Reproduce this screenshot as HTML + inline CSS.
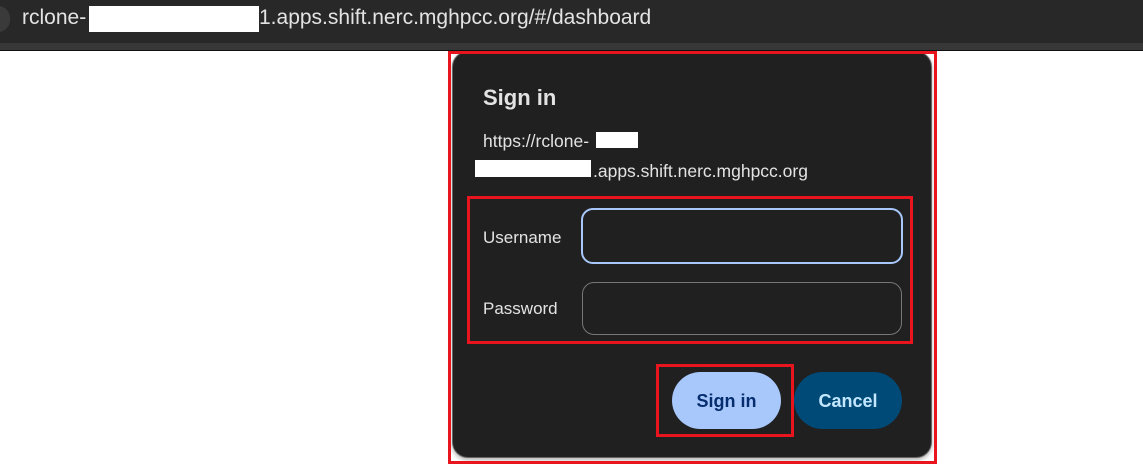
<!DOCTYPE html>
<html><head><meta charset="utf-8"><style>
*{margin:0;padding:0;box-sizing:border-box}
body{width:1143px;height:473px;background:#fff;position:relative;overflow:hidden;font-family:"Liberation Sans",sans-serif}
.a{position:absolute;white-space:nowrap}
</style></head><body>
<div class="a" style="left:0;top:0;width:1143px;height:43px;background:#282828"></div>
<div class="a" style="left:0;top:43px;width:1143px;height:8px;background:#373737"></div>
<div class="a" style="left:0;top:50px;width:1143px;height:1px;background:#111"></div>
<div class="a" style="left:-14px;top:6px;width:24px;height:26px;border-radius:13px;background:#3a3a3a"></div>
<div class="a" style="left:22px;top:6px;font-size:21px;color:#e3e3e3">rclone-</div>
<div class="a" style="left:259px;top:6px;font-size:21px;color:#e3e3e3">1.apps.shift.nerc.mghpcc.org/#/dashboard</div>
<div class="a" style="left:89px;top:6px;width:170px;height:26px;background:#fff"></div>

<div class="a" style="left:452px;top:51px;width:480px;height:407px;background:#202020;border:1px solid #666;border-radius:16px;box-shadow:0 2px 4px rgba(0,0,0,.3)"></div>
<div class="a" style="left:448px;top:51px;width:489px;height:413px;border:3px solid #e8141e"></div>

<div class="a" style="left:483px;top:85px;font-size:22px;font-weight:bold;color:#e3e3e3">Sign in</div>
<div class="a" style="left:483px;top:131px;font-size:17.5px;color:#e3e3e3">https://rclone-</div>
<div class="a" style="left:596px;top:132px;width:42px;height:16px;background:#fff"></div>
<div class="a" style="left:475px;top:160px;width:116px;height:17px;background:#fff"></div>
<div class="a" style="left:593px;top:161px;font-size:17.5px;color:#e3e3e3">.apps.shift.nerc.mghpcc.org</div>

<div class="a" style="left:467px;top:196px;width:446px;height:148px;border:3px solid #e8141e"></div>
<div class="a" style="left:483px;top:228px;font-size:17px;color:#e3e3e3">Username</div>
<div class="a" style="left:581px;top:208px;width:322px;height:56px;border:2px solid #a8c7fa;border-radius:12px"></div>
<div class="a" style="left:483px;top:299px;font-size:17px;color:#e3e3e3">Password</div>
<div class="a" style="left:582px;top:282px;width:320px;height:53px;border:1px solid #777;border-radius:12px"></div>

<div class="a" style="left:656px;top:364px;width:138px;height:73px;border:3px solid #e8141e"></div>
<div class="a" style="left:672px;top:372px;width:109px;height:57px;background:#a8c7fa;border-radius:29px;color:#062e6f;font-size:18px;font-weight:bold;text-align:center;line-height:58px">Sign in</div>
<div class="a" style="left:794px;top:372px;width:108px;height:57px;background:#004a77;border-radius:29px;color:#c2e7ff;font-size:18px;font-weight:bold;text-align:center;line-height:58px">Cancel</div>
</body></html>
